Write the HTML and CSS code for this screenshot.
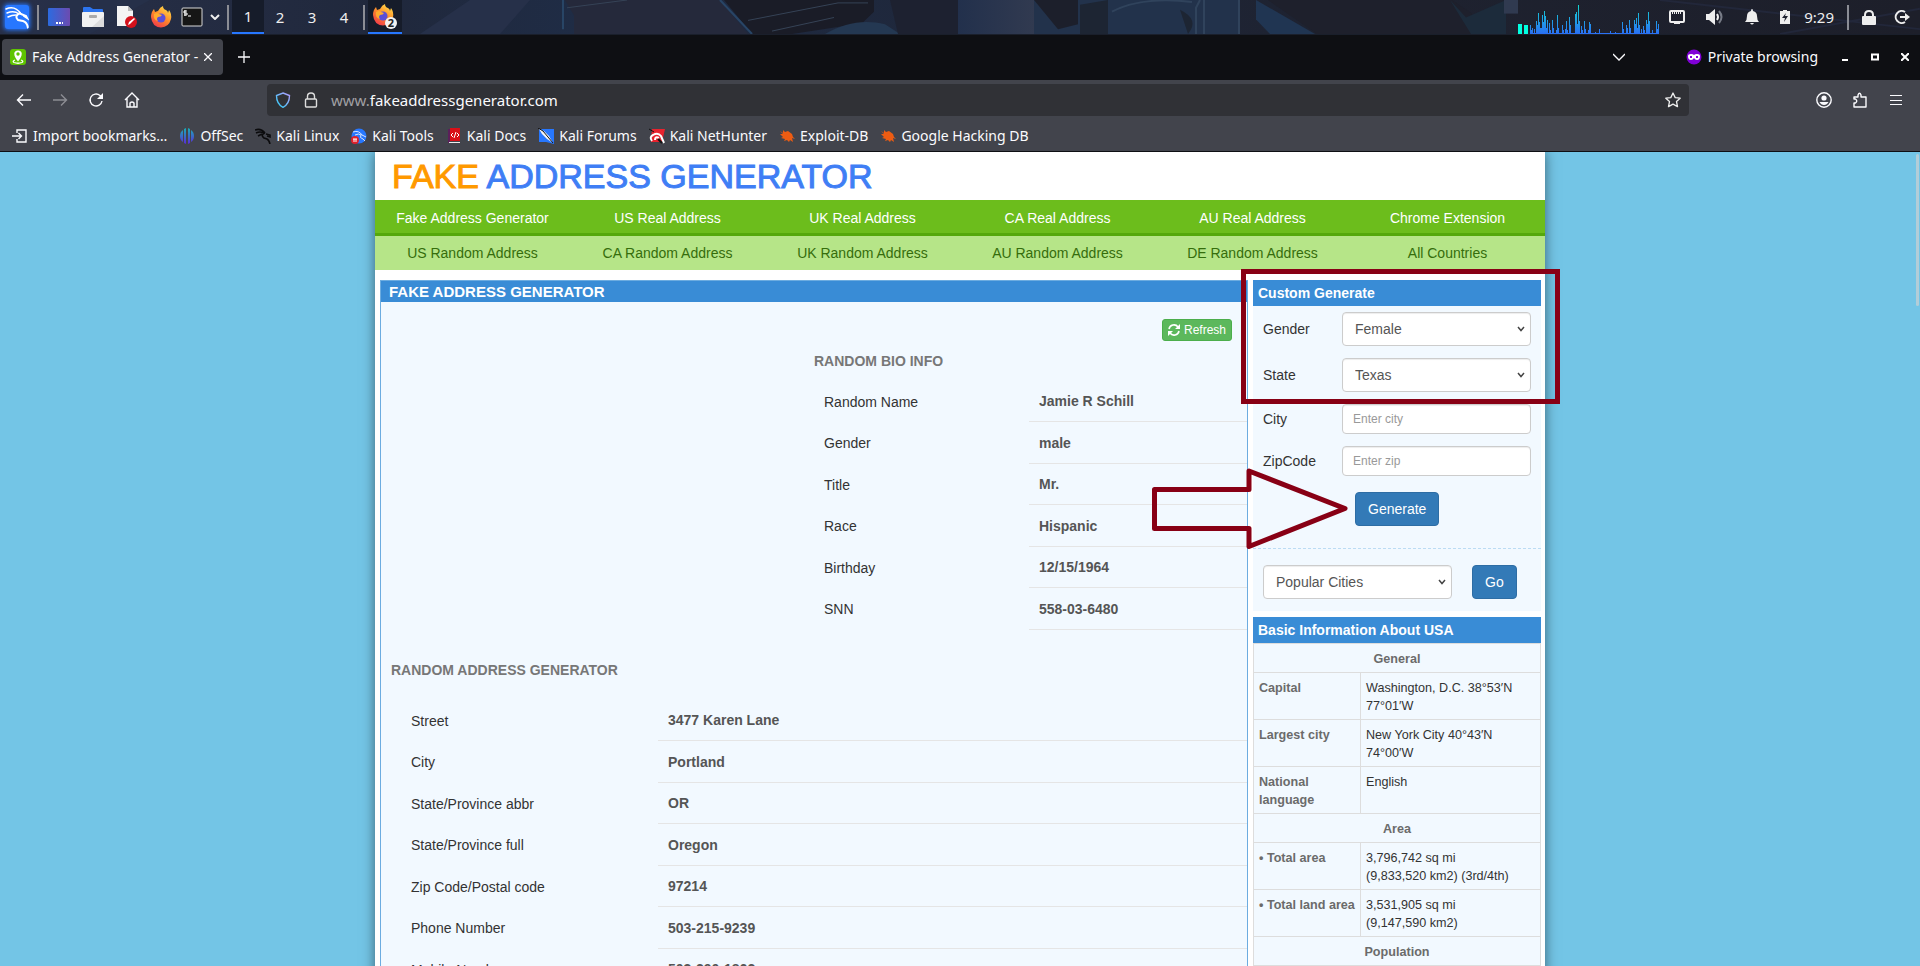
FILE: index.html
```
<!DOCTYPE html>
<html lang="en">
<head>
    <meta charset="UTF-8">
    <meta name="viewport" content="width=device-width, initial-scale=1.0">
    <title>Fake Address Generator</title>
    <link rel="stylesheet" href="styles.css">
</head>
<body>

<!-- Desktop panel -->
<header class="taskbar">
    <svg class="wallpaper" viewBox="0 0 1920 35" preserveAspectRatio="none" aria-hidden="true">
        <defs>
            <linearGradient id="wall" x1="0" x2="1">
                <stop offset="0" stop-color="#283049"/>
                <stop offset=".2" stop-color="#20283c"/>
                <stop offset=".3" stop-color="#1f2c45"/>
                <stop offset=".7" stop-color="#1e2230"/>
                <stop offset="1" stop-color="#1d1f2a"/>
            </linearGradient>
            <linearGradient id="tile" x1="0" x2="1">
                <stop offset="0" stop-color="#22304c"/>
                <stop offset="1" stop-color="#313a50"/>
            </linearGradient>
        </defs>
        <rect width="1920" height="35" fill="url(#wall)"/>
        <path d="M0 35L60 0h90L90 35zM420 35l50-35h60l-30 35z" fill="#263049"/>
        <path d="M565 0h155l28 35H574V16z" fill="#25293b"/>
        <path d="M563 0v30" stroke="#284566" stroke-width="2"/>
        <path d="M724 0h150v12l-12 12-70 11h-40z" fill="#1a1c27"/>
        <path d="M748 21l90-18h30M772 32l62-14M567 8l60-8" stroke="#364356" fill="none"/>
        <path d="M720 0l32 35" stroke="#284566" stroke-width="2"/>
        <path d="M825 35c20-12 40-15 60-10l15 10z" fill="#243852"/>
        <path d="M890 0h68v35h-60z" fill="#1d2130"/>
        <path d="M958 0h76v35h-76z" fill="url(#tile)"/>
        <path d="M1034 0h206v35h-206z" fill="#22324b"/>
        <path d="M1034 0h44v25l-20 5z" fill="#1c1f2b"/>
        <path d="M1080 35V5l28-5v35zM1180 10q20 10 8 25" fill="#1d2533"/>
        <path d="M1112 12q30-16 80-10M1196 35V8l4-8M1204 35V0M1239 35V0" stroke="#30435c" stroke-width="2" fill="none"/>
        <path d="M1256 0v20l14 15h45z" fill="#203552"/>
        <path d="M1268 0h184l20 14v21h-155z" fill="#1e202c"/>
        <path d="M1450 0l16 18 40-18v35h-35" fill="#1c2b3b"/>
        <path d="M1504 0h14v14h-14z" fill="#303a50"/>
        <path d="M1660 0l260 30M1780 35l140-26" stroke="#22273a" stroke-width="2"/>
    </svg>

    <div class="panel-left">
        <button class="panel-btn kali-menu" aria-label="Applications">
            <svg width="24" height="24" viewBox="0 0 24 24" fill="none" stroke="#fff" stroke-linecap="round">
                <path d="M1 4q9-4 15 5M2 8q7-3 12 1M3 12q4-2 8-2" stroke-width="1.5"/>
                <path d="M15 8q-6 3-2 7l5 1q4 1 5 7M16 9l5 2 1 2-3-2" stroke-width="2"/>
            </svg>
        </button>
        <span class="sep"></span>
        <button class="panel-btn" aria-label="Show desktop">
            <svg width="22" height="18" viewBox="0 0 22 18">
                <defs><linearGradient id="desk"><stop stop-color="#2c6be0"/><stop offset="1" stop-color="#6c4bb0"/></linearGradient></defs>
                <rect width="22" height="18" rx="1" fill="url(#desk)"/>
                <path d="M8 15h2m1 0h2m1 0h1" stroke="#fff" stroke-width="2"/>
            </svg>
        </button>
        <button class="panel-btn" aria-label="Files">
            <svg width="22" height="20" viewBox="0 0 22 20">
                <path d="M1 6V1q0-1 1-1h6l3 2h9q1 0 1 1v4z" fill="#2c74ee"/>
                <rect y="5" width="22" height="15" rx="1" fill="#f1f1f1"/>
                <path d="M22 9v11H10z" fill="#dcdcdc"/>
                <rect x="7" y="8" width="8" height="3" rx="1" fill="#aaa"/>
            </svg>
        </button>
        <button class="panel-btn" aria-label="Text editor">
            <svg width="22" height="22" viewBox="0 0 22 22">
                <path d="M1 0h11l5 5v15H1z" fill="#f4f4f4"/>
                <path d="M12 0l5 5h-5z" fill="#bbb"/>
                <circle cx="15" cy="16" r="6" fill="#d4111b"/>
                <path d="M12 19l1-3 5-4 1 1-5 5z" fill="#fff"/>
            </svg>
        </button>
        <button class="panel-btn" aria-label="Firefox">
            <svg width="22" height="22" viewBox="0 0 22 22">
                <defs>
                    <linearGradient id="fox" x1=".8" x2=".2" y2="1"><stop stop-color="#ffe14a"/><stop offset=".5" stop-color="#ff8a2a"/><stop offset="1" stop-color="#f0344d"/></linearGradient>
                    <g id="firefox">
                        <path d="M1 11q0-5 3-8l1 3 3-1q2-4 5-5 0 3 3 4 2 1 2 3l1-3q3 4 2 9-2 8-10 8.500Q2 21 1 11z" fill="url(#fox)"/>
                        <circle cx="11" cy="12" r="4.500" fill="#5b4fd8"/>
                        <path d="M4 8q3-2 5 0l3 1q-1 2-4 2-2 2 0 4-5-1-4-7z" fill="#ffab2e"/>
                    </g>
                </defs>
                <use href="#firefox"/>
            </svg>
        </button>
        <button class="panel-btn panel-terminal" aria-label="Terminal">
            <svg width="22" height="20" viewBox="0 0 22 20">
                <rect x="1" y="1" width="20" height="18" rx="1" fill="#161616" stroke="#d8d8d8"/>
                <path d="M6 4H3v2h3v2H3M4 3v6M7 9h3" stroke="#fff" fill="none"/>
            </svg>
        </button>
        <button class="panel-btn panel-more" aria-label="More terminals">
            <svg width="10" height="6" viewBox="0 0 10 6"><path d="M1 1l4 4 4-4" fill="none" stroke="#eee" stroke-width="2"/></svg>
        </button>
        <span class="sep"></span>
        <button class="workspace active">1</button>
        <button class="workspace">2</button>
        <button class="workspace">3</button>
        <button class="workspace">4</button>
        <span class="sep"></span>
        <button class="window-btn active" aria-label="Firefox windows">
            <svg width="28" height="28" viewBox="0 0 28 28">
                <use href="#firefox" x="1" y="2"/>
                <circle cx="20" cy="21" r="6" fill="#f2f2f2"/>
                <text x="20" y="25" class="badge-text">2</text>
            </svg>
        </button>
    </div>

    <div class="panel-right">
        <svg class="cpu-graph" width="141" height="35" viewBox="0 0 141 35" aria-hidden="true">
            <defs><linearGradient id="cpu" gradientUnits="userSpaceOnUse" x1="0" y1="5" x2="0" y2="34"><stop stop-color="#12d8d0"/><stop offset="1" stop-color="#2a6ff5"/></linearGradient></defs>
            <path d="M0 24h4v10H0zM6 25h4v9H6z" fill="#00ffe0"/>
            <path stroke="url(#cpu)" d="M12 33.500h129M12.500 34v-9m1 9v-4m1 4v-6m2 6v-5m2 5v-13m1 13v-9m1 9v-21m1 21v-12m1 12v-6m1 6v-6m1 6v-19m1 19v-12m1 12v-23m1 23v-18m1 18v-6m1 6v-14m2 14v-11m1 11v-4m2 4v-14m1 14v-6m3 6v-4m1 4v-19m1 19v-6m4 6v-9m1 9v-4m2 4v-5m1 5v-13m1 13v-4m2 4v-17m1 17v-9m5 9v-20m1 20v-22m1 22v-10m1 10v-29m1 29v-13m2 13v-8m1 8v-4m2 4v-13m1 13v-5m3 5v-4m1 4v-12m1 12v-10m5 10v-2m4 2v-5m5 5v-1m6 1v-3m5 3v-2m7 2v-12m1 12v-5m3 5v-9m1 9v-6m2 6v-14m1 14v-6m4 6v-14m1 14v-10m1 10v-16m1 16v-6m1 6v-21m1 21v-9m2 9v-5m2 5v-8m1 8v-4m2 4v-14m1 14v-10m1 10v-22m1 22v-13m3 13v-4m4 4v-13m1 13v-5m1 5v-10"/>
        </svg>
        <div class="tray">
            <svg width="16" height="14" viewBox="0 0 16 14"><rect x="1" y="1" width="14" height="11" rx="1" fill="none" stroke="#eee" stroke-width="2"/><path d="M3 3h10" stroke="#eee" stroke-width="2" stroke-dasharray="1 1"/><path d="M5 13h6" stroke="#eee" stroke-width="2"/></svg>
            <svg width="18" height="16" viewBox="0 0 18 16"><path d="M0 5h3l6-5v16l-6-5H0z" fill="#eee"/><path d="M11 5q2 3 0 6" stroke="#eee" stroke-width="2" fill="none"/><path d="M13 2q5 6 0 12" stroke="#777b86" stroke-width="2" fill="none"/></svg>
            <svg width="14" height="16" viewBox="0 0 14 16"><path d="M7 0q1 0 1 2 4 1 4 5 0 4 2 6H0q2-2 2-6 0-4 4-5 0-2 1-2zM5 14h4q-2 3-4 0z" fill="#eee"/></svg>
            <svg width="10" height="14" viewBox="0 0 10 14"><path d="M0 1h3V0h4v1h3v13H0z" fill="#eee"/><path d="M6 3L2 8h3l-1 4 4-6H5z" fill="#1d2130"/></svg>
        </div>
        <span class="clock">9:29</span>
        <span class="sep"></span>
        <svg class="lock-screen" width="14" height="15" viewBox="0 0 14 15"><rect y="6" width="14" height="9" rx="1" fill="#eee"/><path d="M3 7V5q0-4 4-4t4 4v2" stroke="#eee" stroke-width="2" fill="none"/></svg>
        <svg width="16" height="16" viewBox="0 0 16 16"><path d="M11 3a6 6 0 1 0 0 10" stroke="#eee" stroke-width="2" fill="none"/><path d="M6 7h5V4l5 4-5 4V9H6z" fill="#eee"/></svg>
    </div>
</header>

<!-- Browser window -->
<div class="tabbar">
    <div class="tab">
        <svg width="16" height="16" viewBox="0 0 16 16"><rect width="16" height="16" rx="3" fill="#5fc400"/><path d="M8 1.500c5 0 5 5 0 11-5-6-5-11 0-11z" fill="#fff"/><circle cx="8" cy="5" r="1.700" fill="#5fc400"/><path d="M5 11q-3 1-1 2.500 4 1.500 8 0 2-1.500-1-2.500" stroke="#fff" fill="none" stroke-width="1.300"/></svg>
        <span class="tab-title">Fake Address Generator -</span>
        <button class="icon-btn" aria-label="Close tab">
            <svg width="8" height="8" viewBox="0 0 8 8"><path d="M0 0l8 8M8 0L0 8" stroke="#fbfbfe" stroke-width="1.300"/></svg>
        </button>
    </div>
    <button class="icon-btn new-tab" aria-label="New tab">
        <svg width="12" height="12" viewBox="0 0 12 12"><path d="M6 0v12M0 6h12" stroke="#fbfbfe" stroke-width="1.300"/></svg>
    </button>
    <button class="icon-btn list-tabs" aria-label="List all tabs">
        <svg width="12" height="8" viewBox="0 0 12 8"><path d="M0 1l6 6 6-6" stroke="#fbfbfe" fill="none" stroke-width="1.300"/></svg>
    </button>
    <div class="private">
        <svg width="16" height="16" viewBox="0 0 16 16"><circle cx="8" cy="8" r="7.500" fill="#8000d7"/><path d="M2 7q0-2 3-2 2 0 3 1 1-1 3-1 3 0 3 2 0 4-3 4-2 0-3-2-1 2-3 2-3 0-3-4z" fill="#fff"/><path d="M4 8h2M10 8h2" stroke="#8000d7" stroke-width="2"/></svg>
        <span>Private browsing</span>
    </div>
    <div class="window-controls">
        <button class="icon-btn" aria-label="Minimize"><svg width="8" height="8" viewBox="0 0 8 8"><path d="M1 7h6" stroke="#fff" stroke-width="2"/></svg></button>
        <button class="icon-btn" aria-label="Maximize"><svg width="8" height="8" viewBox="0 0 8 8"><path d="M1 1.500h6v5H1z" stroke="#fff" stroke-width="2" fill="none"/></svg></button>
        <button class="icon-btn" aria-label="Close"><svg width="8" height="8" viewBox="0 0 8 8"><path d="M0 0l8 8M8 0L0 8" stroke="#fff" stroke-width="2"/></svg></button>
    </div>
</div>

<div class="toolbar">
    <div class="nav-buttons">
        <button class="icon-btn" aria-label="Back"><svg width="16" height="16" viewBox="0 0 16 16"><path d="M15 8H2M7 2.500L1.500 8 7 13.500" stroke="#fbfbfe" stroke-width="1.400" fill="none"/></svg></button>
        <button class="icon-btn disabled" aria-label="Forward"><svg width="16" height="16" viewBox="0 0 16 16"><path d="M1 8h13M9 2.500L14.500 8 9 13.500" stroke="#fbfbfe" stroke-width="1.400" fill="none"/></svg></button>
        <button class="icon-btn" aria-label="Reload"><svg width="16" height="16" viewBox="0 0 16 16"><path d="M14 9a6 6 0 1 1-2-5.500L14 5.500" stroke="#fbfbfe" stroke-width="1.400" fill="none"/><path d="M15 1v6H9z" fill="#fbfbfe"/></svg></button>
        <button class="icon-btn" aria-label="Home"><svg width="16" height="16" viewBox="0 0 16 16"><path d="M1 8l7-7 7 7M3 6.500V15h10V6.500M6 15v-4q2-2 4 0v4" stroke="#fbfbfe" stroke-width="1.400" fill="none"/></svg></button>
    </div>
    <div class="urlbar">
        <svg width="16" height="16" viewBox="0 0 16 16"><defs><linearGradient id="shield" x1="0" y1="1" x2="1" y2="0"><stop stop-color="#2bd0f5"/><stop offset="1" stop-color="#b59cff"/></linearGradient></defs><path d="M8 1l6.500 2.500Q14.500 12 8 15.300 1.500 12 1.500 3.500z" stroke="url(#shield)" stroke-width="1.400" fill="none"/></svg>
        <svg width="16" height="16" viewBox="0 0 16 16"><rect x="2.500" y="7" width="11" height="8" rx="1" stroke="#ddd" stroke-width="1.400" fill="none"/><path d="M4.500 7V4.500q0-3.500 3.500-3.500t3.500 3.500V7" stroke="#ddd" stroke-width="1.400" fill="none"/></svg>
        <span class="url"><span class="url-sub">www.</span>fakeaddressgenerator.com</span>
        <svg width="16" height="16" viewBox="0 0 16 16"><path d="M8 1l2.200 4.600 5 .6-3.700 3.400 1 5L8 12.100l-4.500 2.500 1-5L.8 6.200l5-.6z" stroke="#eee" stroke-width="1.300" stroke-linejoin="round" fill="none"/></svg>
    </div>
    <div class="toolbar-end">
        <button class="icon-btn" aria-label="Account"><svg width="16" height="16" viewBox="0 0 16 16"><circle cx="8" cy="8" r="7.200" stroke="#fbfbfe" stroke-width="1.400" fill="none"/><circle cx="8" cy="6" r="2.600" fill="#fbfbfe"/><path d="M3.500 10h9q-1.500 3-4.500 3t-4.500-3z" fill="#fbfbfe"/></svg></button>
        <button class="icon-btn" aria-label="Extensions"><svg width="16" height="16" viewBox="0 0 16 16"><path d="M2 15v-4h1.500q2.500-2 0-4H2V5h4V3q1.500-3.500 3 0v2h5v10z" stroke="#fbfbfe" stroke-width="1.400" stroke-linejoin="round" fill="none"/></svg></button>
        <button class="icon-btn" aria-label="Menu"><svg width="16" height="16" viewBox="0 0 16 16"><path d="M2 3.500h12M2 8.500h12M2 12.500h12" stroke="#fbfbfe" stroke-width="1.200"/></svg></button>
    </div>
</div>

<nav class="bookmarks">
    <a href="#"><svg width="16" height="16" viewBox="0 0 16 16"><path d="M5 5V2h9v12H5v-3M0 8h9M6.500 5L9.500 8l-3 3" stroke="#fbfbfe" stroke-width="1.400" fill="none"/></svg>Import bookmarks…</a>
    <a href="#"><svg width="16" height="16" viewBox="0 0 16 16"><defs><linearGradient id="offsec" gradientUnits="userSpaceOnUse" x1="0" y1="0" x2="0" y2="16"><stop stop-color="#16b0b8"/><stop offset="1" stop-color="#5b2bd8"/></linearGradient></defs><path d="M4 2v12Q1 12 1 8t3-6zM5 1l2-1v16l-2-1zM9 0l2 1v14l-2 1zM12 2q3 2 3 6t-3 6z" fill="url(#offsec)"/></svg>OffSec</a>
    <a href="#"><svg width="16" height="16" viewBox="0 0 16 16"><path d="M0 2q6-2 10 3M1 5q4-2 8 0M3 8l4-2M10 5q-5 2-1 5l3 1q2 1 3 5M11 6l4 1v2l-3-1" stroke="#0b0b0d" stroke-width="1.600" fill="none"/></svg>Kali Linux</a>
    <a href="#"><svg width="16" height="16" viewBox="0 0 16 16"><circle cx="8" cy="8" r="7.500" fill="#2777ff"/><path d="M2 4q6-2 9 3M4 7q4-2 6 0-2 3 2 4l2 2M11 7l4 2" stroke="#d7e6ff" fill="none"/><circle cx="4" cy="12" r="4" fill="#e0212b"/><path d="M2 11h4M3 11v3M5 11v3" stroke="#fff"/></svg>Kali Tools</a>
    <a href="#"><svg width="16" height="16" viewBox="0 0 16 16"><path d="M4 0h10v13H4z" fill="#d90f17"/><path d="M2 1h2v14H2z" fill="#5b1f5a"/><path d="M3 14h11v1H3z" fill="#eee"/><path d="M7 5L5 7l2 2M11 5l2 2-2 2M10 4L8 10" stroke="#fff" fill="none"/></svg>Kali Docs</a>
    <a href="#"><svg width="16" height="16" viewBox="0 0 16 16"><path d="M1 1h15v15L8 14H1z" fill="#2777ff"/><path d="M1 1l5 2 5 5 4 7-6-4-5-5z" fill="#f5f5f5"/><path d="M0 0l5 3 10 12" stroke="#111" fill="none"/></svg>Kali Forums</a>
    <a href="#"><svg width="16" height="16" viewBox="0 0 16 16"><path d="M3 1h13l-3 13H2z" fill="#e8232e"/><path d="M0 1l5 3" stroke="#111"/><path d="M3 13q-3-4 1-6 5-3 8 1l3 7M6 12q0-4 4-2" stroke="#fff" stroke-width="2" fill="none"/><path d="M9 11l4 4" stroke="#111" stroke-width="2"/></svg>Kali NetHunter</a>
    <a href="#"><svg width="16" height="16" viewBox="0 0 16 16"><path id="bug" d="M1 3l3 2V2l2 2 3-1 4 3 1 3 2 2-3-1 1 4-3-2-1 2-2-2-3 1 1-2-4-1 2-1-3-3h3z" fill="#ed5c12"/></svg>Exploit-DB</a>
    <a href="#"><svg width="16" height="16" viewBox="0 0 16 16"><use href="#bug"/></svg>Google Hacking DB</a>
</nav>

<!-- Web page -->
<div class="viewport">
    <div class="container">
        <h1 class="logo"><span>FAKE</span> ADDRESS GENERATOR</h1>

        <nav class="menu">
            <a href="#">Fake Address Generator</a>
            <a href="#">US Real Address</a>
            <a href="#">UK Real Address</a>
            <a href="#">CA Real Address</a>
            <a href="#">AU Real Address</a>
            <a href="#">Chrome Extension</a>
        </nav>
        <nav class="menu submenu">
            <a href="#">US Random Address</a>
            <a href="#">CA Random Address</a>
            <a href="#">UK Random Address</a>
            <a href="#">AU Random Address</a>
            <a href="#">DE Random Address</a>
            <a href="#">All Countries</a>
        </nav>

        <div class="content">
            <main class="main">
                <h2 class="main-title">FAKE ADDRESS GENERATOR</h2>
                <div class="refresh-row">
                    <button class="btn btn-success">
                        <svg width="12" height="12" viewBox="0 0 12 12"><path d="M1 5a5 5 0 0 1 9-2M11 7a5 5 0 0 1-9 2" stroke="#fff" stroke-width="1.600" fill="none"/><path d="M12 0v5H7zM0 12V7h5z" fill="#fff"/></svg>
                        Refresh
                    </button>
                </div>

                <section class="bio">
                    <h3>RANDOM BIO INFO</h3>
                    <table class="info">
                        <tr><th>Random Name</th><td>Jamie R Schill</td></tr>
                        <tr><th>Gender</th><td>male</td></tr>
                        <tr><th>Title</th><td>Mr.</td></tr>
                        <tr><th>Race</th><td>Hispanic</td></tr>
                        <tr><th>Birthday</th><td>12/15/1964</td></tr>
                        <tr><th>SNN</th><td>558-03-6480</td></tr>
                    </table>
                </section>

                <section class="address">
                    <h3>RANDOM ADDRESS GENERATOR</h3>
                    <table class="info">
                        <tr><th>Street</th><td>3477 Karen Lane</td></tr>
                        <tr><th>City</th><td>Portland</td></tr>
                        <tr><th>State/Province abbr</th><td>OR</td></tr>
                        <tr><th>State/Province full</th><td>Oregon</td></tr>
                        <tr><th>Zip Code/Postal code</th><td>97214</td></tr>
                        <tr><th>Phone Number</th><td>503-215-9239</td></tr>
                        <tr><th>Mobile Number</th><td>503-290-1862</td></tr>
                    </table>
                </section>
            </main>

            <aside class="sidebar">
                <h2 class="side-title">Custom Generate</h2>
                <form class="custom">
                    <div class="field">
                        <label for="gender">Gender</label>
                        <select id="gender"><option>Female</option><option>Male</option></select>
                    </div>
                    <div class="field">
                        <label for="state">State</label>
                        <select id="state"><option>Texas</option></select>
                    </div>
                    <div class="field">
                        <label for="city">City</label>
                        <input type="text" id="city" placeholder="Enter city">
                    </div>
                    <div class="field">
                        <label for="zip">ZipCode</label>
                        <input type="text" id="zip" placeholder="Enter zip">
                    </div>
                    <button type="button" class="btn btn-primary generate">Generate</button>
                    <div class="popular">
                        <select aria-label="Popular Cities"><option>Popular Cities</option></select>
                        <button type="button" class="btn btn-primary">Go</button>
                    </div>
                </form>

                <h2 class="side-title">Basic Information About USA</h2>
                <table class="facts">
                    <tr><th colspan="2" class="group">General</th></tr>
                    <tr><th>Capital</th><td>Washington, D.C. 38°53′N 77°01′W</td></tr>
                    <tr><th>Largest city</th><td>New York City 40°43′N 74°00′W</td></tr>
                    <tr><th>National language</th><td>English</td></tr>
                    <tr><th colspan="2" class="group">Area</th></tr>
                    <tr><th>• Total area</th><td>3,796,742 sq mi (9,833,520&nbsp;km2) (3rd/4th)</td></tr>
                    <tr><th>• Total land area</th><td>3,531,905 sq mi (9,147,590&nbsp;km2)</td></tr>
                    <tr><th colspan="2" class="group">Population</th></tr>
                </table>

                <!-- Highlights over the form -->
                <div class="mark-box"></div>
                <svg class="mark-arrow" width="200" height="84" viewBox="0 0 200 84" aria-hidden="true">
                    <path d="M2.500 22.500H97V4L193 41.500 97 79.500V61.500H2.500z" fill="none" stroke="#880015" stroke-width="5" stroke-linejoin="round"/>
                </svg>
            </aside>
        </div>
    </div>
    <div class="scroll-thumb"></div>
</div>

</body>
</html>
```
FILE: styles.css
```
* {
    box-sizing: border-box;
}
body {
    margin: 0;
    height: 100vh;
    display: flex;
    flex-direction: column;
    overflow: hidden;
    font-family: "Liberation Sans", Arial, sans-serif;
    font-size: 14px;
    line-height: 20px;
    color: #333;
}
h1, h2, h3 {
    margin: 0;
}
a {
    text-decoration: none;
}
svg {
    display: block;
    flex-shrink: 0;
}
button {
    cursor: pointer;
}

/* Desktop panel */
.taskbar {
    position: relative;
    display: flex;
    justify-content: space-between;
    height: 35px;
    flex-shrink: 0;
    font-family: "Noto Sans", sans-serif;
    color: #eee;
    border-bottom: 1px solid #1a1f2b;
}
.wallpaper {
    position: absolute;
    inset: 0;
    width: 100%;
    height: 100%;
    z-index: -1;
}
.panel-left, .panel-right {
    display: flex;
    align-items: center;
}
.panel-left {
    padding-left: 3px;
}
.panel-right {
    padding-right: 10px;
    gap: 14px;
}
.panel-btn, .workspace, .window-btn, .icon-btn {
    display: flex;
    align-items: center;
    justify-content: center;
    padding: 0;
    border: 0;
    background: none;
    color: inherit;
    font: inherit;
}
.panel-btn {
    width: 34px;
    height: 34px;
}
.kali-menu {
    width: 28px;
}
.kali-menu svg {
    background: #2777ff;
    border-radius: 3px;
    box-shadow: 0 0 4px 1px #2777ff;
}
.panel-terminal {
    width: 28px;
}
.panel-more {
    width: 18px;
}
.sep {
    width: 2px;
    height: 25px;
    margin: 0 3px;
    background: #8b8d95;
}
.kali-menu + .sep {
    margin-left: 6px;
}
.workspace {
    width: 32px;
    height: 34px;
    font-size: 15px;
}
.window-btn {
    width: 34px;
    height: 34px;
}
.workspace.active, .window-btn.active {
    background: #161c2a;
    border-bottom: 2px solid #2777ff;
}
.badge-text {
    font: bold 11px "Noto Sans", sans-serif;
    text-anchor: middle;
    fill: #222;
}
.tray {
    display: flex;
    align-items: center;
    gap: 21px;
}
.cpu-graph {
    margin-right: -4px;
}
.clock {
    font-size: 15px;
}
.panel-right .sep {
    margin: 0 -1px;
}
.lock-screen {
    margin-right: 4px;
}

/* Browser tabs */
.tabbar {
    display: flex;
    align-items: center;
    height: 45px;
    flex-shrink: 0;
    padding: 0 11px 1px 2px;
    background: #0e0f13;
    color: #fbfbfe;
    font-family: "Noto Sans", sans-serif;
}
.tab {
    display: flex;
    align-items: center;
    gap: 6px;
    width: 221px;
    height: 36px;
    padding: 0 12px 0 8px;
    border-radius: 4px;
    background: #42444c;
}
.tab-title {
    flex: 1;
    white-space: nowrap;
}
.new-tab {
    margin-left: 15px;
}
.list-tabs {
    margin-left: auto;
}
.private {
    display: flex;
    align-items: center;
    gap: 6px;
    margin-left: 61px;
}
.window-controls {
    display: flex;
    gap: 22px;
    margin-left: 23px;
}

/* Address bar */
.toolbar {
    display: flex;
    align-items: center;
    height: 40px;
    flex-shrink: 0;
    padding: 0 16px;
    background: #42444c;
    font-family: "Noto Sans", sans-serif;
    color: #fbfbfe;
}
.nav-buttons, .toolbar-end {
    display: flex;
    gap: 20px;
}
.disabled {
    opacity: 0.4;
}
.urlbar {
    display: flex;
    align-items: center;
    flex: 1;
    gap: 12px;
    height: 32px;
    margin: 0 127px;
    padding: 0 8px;
    border-radius: 4px;
    background: #303136;
}
.urlbar .url {
    flex: 1;
    font-size: 15px;
}
.url-sub {
    color: #a0a0a4;
}
.bookmarks {
    display: flex;
    align-items: center;
    gap: 12px;
    height: 32px;
    flex-shrink: 0;
    padding: 0 12px;
    background: #42444c;
    border-bottom: 1px solid #0e0f13;
    font-family: "Noto Sans", sans-serif;
}
.bookmarks a {
    display: flex;
    align-items: center;
    gap: 5px;
    color: #fbfbfe;
    white-space: nowrap;
}

/* Web page */
.viewport {
    position: relative;
    flex: 1;
    overflow: hidden;
    background: #73c5e6;
}
.scroll-thumb {
    position: absolute;
    top: 2px;
    right: 1px;
    width: 3px;
    height: 152px;
    border-radius: 2px;
    background: #b2cdd8;
}
.container {
    max-width: 1170px;
    min-height: 100%;
    margin: 0 auto;
    background: #fff;
    box-shadow: 0 0 12px rgba(0, 0, 0, 0.5);
}
.logo {
    padding: 4px 17px;
    font-size: 34px;
    line-height: 40px;
    font-weight: normal;
    color: #3f7ef5;
    -webkit-text-stroke: 1px currentColor;
}
.logo span {
    color: #ff9900;
}
.menu {
    display: grid;
    grid-template-columns: repeat(6, 1fr);
    background: #6cbd1c;
    border-bottom: 3px solid #54a80b;
    text-align: center;
}
.menu a {
    padding: 8px 0 5px;
    color: #fff;
}
.submenu {
    background: #b6e588;
    border-bottom: 0;
}
.submenu a {
    padding: 7px 0;
    color: #356d0c;
}
.content {
    display: flex;
    align-items: flex-start;
    gap: 5px;
    padding: 10px 4px 0 5px;
}
.main {
    flex: 1;
    min-height: 820px;
    border: 1px solid #6cace0;
    background: #f2f9ff;
}
.main-title {
    padding: 0 8px;
    background: #398cd6;
    color: #fff;
    font-size: 15px;
    line-height: 21px;
}
.refresh-row {
    display: flex;
    justify-content: flex-end;
    padding: 17px 15px 10px;
}
.btn {
    border: 1px solid;
    border-radius: 4px;
    color: #fff;
    font: inherit;
}
.btn-success {
    display: flex;
    align-items: center;
    gap: 4px;
    padding: 1px 5px;
    border-radius: 3px;
    border-color: #4cae4c;
    background: #5cb85c;
    font-size: 12px;
    line-height: 18px;
}
.btn-primary {
    padding: 6px 12px;
    border-color: #2e6da4;
    background: #337ab7;
}
.bio {
    width: 50%;
    margin-left: auto;
}
.main h3 {
    color: #777;
    font-size: 14px;
    line-height: 20px;
}
.bio h3 {
    margin-bottom: 10px;
}
.info {
    width: 100%;
    border-collapse: separate;
    border-spacing: 0;
}
.info tr {
    height: 41px;
}
.info tr:nth-child(even) {
    height: 42px;
}
.info th {
    width: 215px;
    padding: 0 10px;
    font-weight: normal;
    text-align: left;
}
.info td {
    padding: 0 10px;
    border-bottom: 1px solid #e5e5e5;
    color: #555;
    font-weight: bold;
}
.address {
    padding-left: 10px;
}
.address h3 {
    padding: 30px 0 20px;
}
.address .info {
    width: calc(100% - 10px);
    margin-left: 10px;
}
.address .info th {
    width: 257px;
}

/* Sidebar */
.sidebar {
    position: relative;
    width: 288px;
}
.side-title {
    padding: 3px 5px;
    background: #398cd6;
    color: #fff;
    font-size: 14px;
    line-height: 20px;
}
.custom {
    margin-bottom: 6px;
    padding-top: 6px;
    background: #f2f9ff;
}
.field {
    display: flex;
    align-items: center;
    margin-bottom: 12px;
    padding: 0 10px;
}
.field label {
    width: 79px;
}
select, input {
    width: 189px;
    height: 34px;
    padding: 6px 12px;
    border: 1px solid #ccc;
    border-radius: 4px;
    background-color: #fff;
    box-shadow: inset 0 1px 1px rgba(0, 0, 0, 0.075);
    color: #555;
    font: inherit;
}
select {
    appearance: none;
    background-image: url("data:image/svg+xml,%3Csvg xmlns='http://www.w3.org/2000/svg' width='8' height='6' viewBox='0 0 8 6'%3E%3Cpath d='M1 1l3 3.500L7 1' fill='none' stroke='%23444' stroke-width='1.500'/%3E%3C/svg%3E");
    background-repeat: no-repeat;
    background-position: right 5px center;
}
input {
    height: 30px;
    padding: 5px 10px;
    font-size: 12px;
}
input::placeholder {
    color: #999;
}
.generate {
    display: block;
    margin: 16px 0 22px 102px;
}
.popular {
    display: flex;
    gap: 20px;
    padding: 16px 10px 12px;
    border-top: 1px dashed #bcdcf4;
}
.facts {
    width: 100%;
    border-collapse: collapse;
    background: #f2f9ff;
    font-size: 90%;
    line-height: 18px;
}
.facts th, .facts td {
    padding: 6px 5px 4px;
    border: 1px solid #ddd;
    text-align: left;
    vertical-align: top;
}
.facts th {
    width: 107px;
    color: #6b6b6b;
}
.facts .group {
    text-align: center;
}

/* Red highlights */
.mark-box {
    position: absolute;
    top: -11px;
    left: -12px;
    width: 319px;
    height: 135px;
    border: 5px solid #880015;
}
.mark-arrow {
    position: absolute;
    top: 187px;
    left: -101px;
}
```
